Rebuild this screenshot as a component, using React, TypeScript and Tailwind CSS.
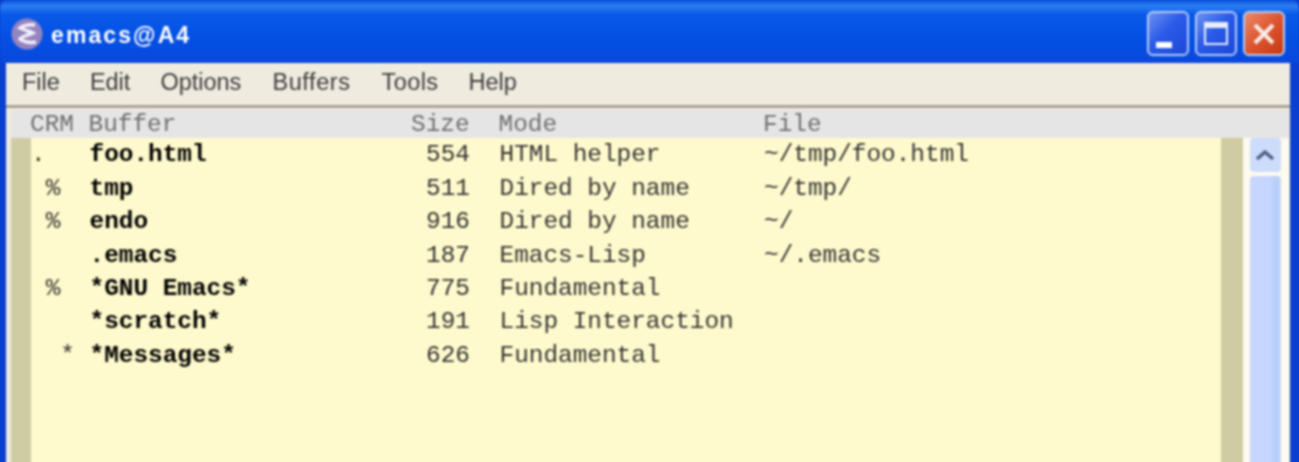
const menus = [
  { label: "File", className: "" },
  { label: "Edit", className: "" },
  { label: "Options", className: "" },
  { label: "Buffers", className: "ml-[1px] tracking-[0.6px]" },
  { label: "Tools", className: "ml-[1px] tracking-[0.4px]" },
  { label: "Help", className: "" },
];

const buffers = [
  { crm: ".", name: "foo.html", size: "554", mode: "HTML helper", file: "~/tmp/foo.html" },
  { crm: " %", name: "tmp", size: "511", mode: "Dired by name", file: "~/tmp/" },
  { crm: " %", name: "endo", size: "916", mode: "Dired by name", file: "~/" },
  { crm: "", name: ".emacs", size: "187", mode: "Emacs-Lisp", file: "~/.emacs" },
  { crm: " %", name: "*GNU Emacs*", size: "775", mode: "Fundamental", file: "" },
  { crm: "", name: "*scratch*", size: "191", mode: "Lisp Interaction", file: "" },
  { crm: "  *", name: "*Messages*", size: "626", mode: "Fundamental", file: "" },
];

const Row = ({ crm, name, size, mode, file, header }: { crm: string; name: string; size: string; mode: string; file: string; header?: boolean }) => (
  <div className={`flex h-[33.4px] items-center whitespace-pre font-['Liberation_Mono',monospace] text-[24.4px] leading-none ${header ? "text-[#6f6f6f]" : "text-[#333333]"}`}>
    <span className="w-[58.5px]">{crm}</span>
    <span className={`w-[322.5px] ${header ? "" : "font-bold text-black"}`}>{name}</span>
    <span className="w-[58px] text-right">{size}</span>
    <span className="ml-[29.5px] w-[264.5px]">{mode}</span>
    <span>{file}</span>
  </div>
);

const CaptionButton = ({ className, children }: { className: string; children: React.ReactNode }) => (
  <div className={`flex h-[45px] w-[42px] items-center justify-center rounded-[6px] border-2 border-[#b8ccf6] ${className}`}>
    {children}
  </div>
);

export default function App() {
  return (
    <div className="h-[462px] w-[1299px] overflow-hidden bg-[#0a3fd0]">
      <div className="h-[490px] w-[1299px] blur-[1px]">
        <div className="flex h-[63px] items-center rounded-t-[8px] bg-[linear-gradient(180deg,#0a55dc_0%,#2a7ef2_10%,#0a5ae8_22%,#0450e4_60%,#0a48dc_100%)] pl-[11px] pr-[14px] pt-[4px]">
          <svg width="32" height="32" viewBox="0 0 32 32" className="shrink-0">
            <circle cx="16" cy="16" r="15.5" fill="#9484c0" />
            <path d="M24 7 C17 6 11 8 9 10 C13 12 19 13 22 15 C18 17 11 18 9 21 C12 24 19 25 25 24" fill="none" stroke="#f2eff8" strokeWidth="3.5" />
          </svg>
          <span className="ml-[8px] pt-[3px] font-['Liberation_Sans',sans-serif] text-[23px] font-bold tracking-[2.1px] text-white">emacs@A4</span>
          <div className="ml-auto flex gap-[6px]">
            <CaptionButton className="bg-[linear-gradient(135deg,#6c92f2_0%,#2a5ae8_45%,#1d48d8_100%)]">
              <div className="mt-[22px] mr-[8px] h-[6px] w-[16px] bg-white" />
            </CaptionButton>
            <CaptionButton className="bg-[linear-gradient(135deg,#6c92f2_0%,#2a5ae8_45%,#1d48d8_100%)]">
              <div className="h-[23px] w-[24px] border-2 border-t-[6px] border-[#e8eefc]" />
            </CaptionButton>
            <CaptionButton className="bg-[linear-gradient(135deg,#ec8a68_0%,#dc5430_50%,#c83a10_100%)]">
              <svg width="24" height="24" viewBox="0 0 24 24">
                <path d="M3 3 L21 21 M21 3 L3 21" stroke="#f6ece6" strokeWidth="4" />
              </svg>
            </CaptionButton>
          </div>
        </div>

        <div className="mx-[6px] mr-[9px] flex h-[427px] flex-col bg-[#efebdf]">
          <div className="flex h-[42px] items-center gap-[30px] pb-[3px] pl-[16px] font-['Liberation_Sans',sans-serif] text-[23.5px] text-[#3c3c3c]">
            {menus.map((m) => (
              <span key={m.label} className={m.className}>{m.label}</span>
            ))}
          </div>
          <div className="h-[3px] bg-[#a8a396]" />
          <div className="ml-[5px] mt-[2px] flex min-h-0 flex-1 flex-col pr-[1px]">
            <div className="flex h-[28px] items-center bg-[#e5e5e5] pl-[19px] pt-[2px]">
              <div className="w-full">
                <Row crm="CRM" name="Buffer" size="Size" mode="Mode" file="File" header />
              </div>
            </div>
            <div className="flex min-h-0 flex-1">
              <div className="w-[20px] bg-[#cfcba2]" />
              <div className="flex-1 bg-[#fffacd] pt-[1px]">
                {buffers.map((b) => (
                  <Row key={b.name} {...b} />
                ))}
              </div>
              <div className="w-[22px] bg-[#cfcba2]" />
              <div className="flex w-[46px] flex-col items-center gap-[4px] bg-[#fdfbee] pr-[2px]">
                <div className="flex h-[34px] w-[31px] items-center justify-center rounded-[4px] bg-[#cddcfb]">
                  <svg width="20" height="12" viewBox="0 0 20 12">
                    <path d="M2 10 L10 3 L18 10" fill="none" stroke="#4d6185" strokeWidth="3.5" />
                  </svg>
                </div>
                <div className="w-[31px] flex-1 rounded-t-[4px] bg-[linear-gradient(90deg,#c8d6fd_0%,#c6d6ff_65%,#b4cdfb_85%,#c8d6f4_100%)]" />
              </div>
            </div>
          </div>
        </div>
      </div>
    </div>
  );
}
